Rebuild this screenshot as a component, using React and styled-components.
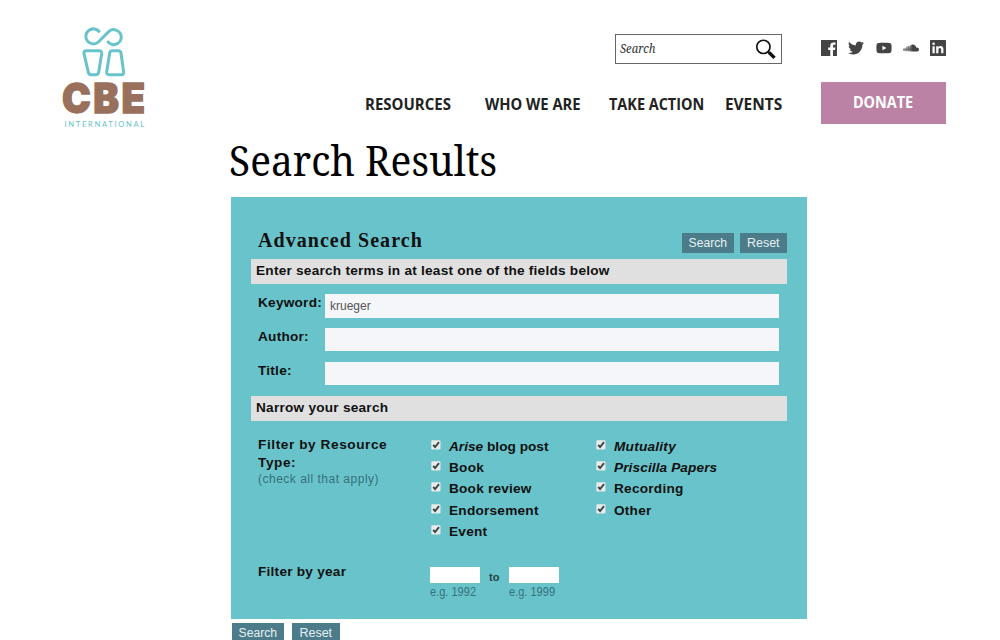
import React from 'react';
import styled, { createGlobalStyle } from 'styled-components';
import { FaTwitter, FaYoutube, FaSoundcloud } from 'react-icons/fa';

const sans = '"Liberation Sans", Arial, sans-serif';
const humanist = '"Open Sans", "Noto Sans", sans-serif';
const serif = '"Noto Serif", "Liberation Serif", serif';
const teal = '#69c3cb';

const Global = createGlobalStyle`
  * { box-sizing: border-box; }
  body { margin: 0; background: #fff; overflow: hidden; }
  h1, h2, h3, p { margin: 0; }
`;

const Page = styled.div`
  width: 1000px;
  height: 640px;
  overflow: hidden;
  color: #111;
  font-family: ${sans};
`;

const Fit = styled.span`
  display: inline-block;
  white-space: pre;
  transform: scaleX(${(p) => p.$x || 1});
  transform-origin: ${(p) => p.$origin || '0 50%'};
  letter-spacing: ${(p) => p.$ls || 0}px;
`;

const Header = styled.header`
  display: grid;
  grid-template-columns: 303px 417px 125px;
  height: 130px;
  padding-left: 62px;
`;
const Logo = styled.div`
  display: flex;
  flex-direction: column;
  padding-top: 26.7px;
  svg { display: block; margin-left: 19.7px; }
`;
const Wordmark = styled.div`
  height: 37px;
  margin-top: 4px;
  font: 900 40.5px/36px Inter, sans-serif;
  color: #98705c;
  -webkit-text-stroke: 1.3px #98705c;
`;
const Tagline = styled.div`
  padding-left: 2.5px;
  font: 400 7.6px/12px Lato, sans-serif;
  color: ${teal};
`;
const Center = styled.div`
  display: flex;
  flex-direction: column;
  align-items: flex-end;
  padding-top: 34px;
`;
const SearchBox = styled.div`
  display: flex;
  align-items: center;
  justify-content: space-between;
  width: 167px;
  height: 30px;
  padding: 0 5px 0 4px;
  border: 1.5px solid #666;
  font: italic 400 12.5px/28px ${serif};
  color: #333;
`;
const Nav = styled.nav`
  display: grid;
  grid-template-columns: 120px 124px 116px 57px;
  margin-top: 28px;
  font: 700 16.3px/24px ${humanist};
  color: #222;
`;
const Side = styled.div`
  margin-left: 39px;
  width: 125px;
  padding-top: 40px;
`;
const Social = styled.div`
  display: flex;
  align-items: center;
  justify-content: space-between;
  height: 16px;
  color: #444;
  svg { display: block; }
`;
const Donate = styled.div`
  display: flex;
  align-items: center;
  justify-content: center;
  height: 42px;
  margin-top: 26px;
  padding-bottom: 2px;
  background: #bc82a5;
  color: #fff;
  font: 700 16.3px/40px ${humanist};
`;

const Title = styled.h1`
  height: 67px;
  padding-left: 228.5px;
  font: 400 41.5px/61px ${serif};
  color: #000;
`;

const Panel = styled.section`
  width: 576px;
  height: 422px;
  margin-left: 231px;
  padding: 36px 20px 0;
  background: ${teal};
`;
const PanelHead = styled.div`
  display: flex;
  align-items: flex-start;
  justify-content: space-between;
  height: 26px;
  padding-left: 7px;
`;
const PanelTitle = styled.h2`
  font: 700 20px/14px "Liberation Serif", serif;
`;
const Buttons = styled.div`
  display: flex;
  gap: ${(p) => p.$gap || 6}px;
`;
const Button = styled.div`
  width: ${(p) => p.$w}px;
  height: 19.5px;
  background: #4c7c89;
  color: #e6f1f6;
  font: 400 12.5px/20px ${sans};
  text-align: center;
`;
const Bar = styled.div`
  height: 25px;
  padding-left: 5px;
  background: #e0e0e0;
  font: 700 12.5px/25px ${sans};
`;
const Fields = styled.div`
  display: flex;
  flex-direction: column;
  gap: 10.7px;
  padding: 10px 8px 11px 7px;
`;
const Field = styled.div`
  display: grid;
  grid-template-columns: 67px 1fr;
  height: 23.2px;
  font: 700 12.5px/18px ${sans};
`;
const Input = styled.div`
  padding-left: 5px;
  background: #f4f6f9;
  color: #555;
  font: 400 12px/24px ${sans};
`;
const Filters = styled.div`
  display: grid;
  grid-template-columns: 173px 165px 1fr;
  height: 131px;
  padding: 15px 0 0 7px;
  font: 700 12.5px/18px ${sans};
`;
const Hint = styled.div`
  color: #35727b;
  font: 400 12px/${(p) => p.$lh || 15}px ${sans};
`;
const Options = styled.div`
  font-size: 12.5px;
`;
const Option = styled.div`
  display: grid;
  grid-template-columns: 18px 1fr;
  height: 21.2px;
  line-height: 22px;
  svg { display: block; margin-top: 4px; }
`;
const Year = styled.div`
  display: grid;
  grid-template-columns: 172px 50px 28.5px 50px;
  padding: 11px 0 0 7px;
  font: 700 12.5px/18px ${sans};
`;
const YearInput = styled.div`
  height: 15.5px;
  margin-top: 4.5px;
  background: #fff;
`;
const To = styled.div`
  padding: 5px 0 0 9px;
  font: 700 11px/18px ${sans};
  color: #23454a;
`;
const Bottom = styled.div`
  padding: 4px 0 0 232px;
`;

const Mark = () => (
  <svg width="45" height="50" viewBox="95 35 135 150" fill="none" stroke={teal} strokeWidth="9" strokeLinejoin="round">
    <path d="M148 51A22.5 22.5 0 1 0 144 80L176 48A22.5 22.5 0 1 1 171 77" />
    <path d="M109 106H146Q155 106 154 115L145 171Q144 178 137 178H122Q115 178 114 171L101 115Q99 106 109 106Z" />
    <path d="M186 106H204Q211 106 212 113L220 170Q221 178 213 178H177Q168 178 169 170L178 113Q179 106 186 106Z" />
  </svg>
);
const Lens = () => (
  <svg width="21" height="21" viewBox="0 0 20 20" fill="none" stroke="#111">
    <circle cx="8" cy="7.5" r="6.3" strokeWidth="1.6" />
    <path d="M12.4 11.9L14 13.5" strokeWidth="2" />
    <path d="M13.4 12.9L18.6 18" strokeWidth="3.2" />
  </svg>
);
const Facebook = () => (
  <svg width="16" height="16" viewBox="0 0 16 16">
    <path fill="currentColor" d="M0 0H16V16H12V10H14L14.4 7.5H12V6C12 5.2 12.4 4.8 13.2 4.8H14.5V2.6C14.1 2.5 13.4 2.5 12.7 2.5C10.6 2.5 9.3 3.6 9.3 5.7V7.5H7.2V10H9.3V16H0Z" />
  </svg>
);
const LinkedIn = () => (
  <svg width="16" height="16" viewBox="0 0 16 16">
    <rect width="16" height="16" rx="0.6" fill="currentColor" />
    <path fill="#fff" d="M2.5 6.2H4.7V13.3H2.5ZM6.2 6.2H8.3V7.2C8.8 6.4 9.5 6 10.6 6C12.7 6 13.4 7.3 13.4 9.3V13.3H11.2V9.8C11.2 8.7 11 7.9 9.9 7.9C8.8 7.9 8.4 8.7 8.4 9.8V13.3H6.2Z" />
    <circle cx="3.6" cy="3.8" r="1.3" fill="#fff" />
  </svg>
);
const Check = () => (
  <svg width="10" height="10" viewBox="0 0 10 10">
    <rect x="0.3" y="0.3" width="9.2" height="9.2" rx="1.2" fill="#e9eaea" />
    <path d="M2.2 5L4.1 7L8 2.2" fill="none" stroke="#3f4446" strokeWidth="1.9" />
  </svg>
);

const Bold = ({ x = 1.09, ls = 0.22, children }) => <Fit $x={x} $ls={ls}>{children}</Fit>;
const Item = ({ children, x, ls }) => (
  <Option><Check /><div><Bold x={x} ls={ls}>{children}</Bold></div></Option>
);
const Actions = ({ gap }) => (
  <Buttons $gap={gap}>
    <Button $w={52}><Fit $x={0.97} $origin="50% 50%">Search</Fit></Button>
    <Button $w={47.5}><Fit $origin="50% 50%">Reset</Fit></Button>
  </Buttons>
);

export default function App() {
  return (
    <Page>
      <Global />
      <Header>
        <Logo>
          <Mark />
          <Wordmark><Fit $x={0.95} $ls={2.6}>CBE</Fit></Wordmark>
          <Tagline><Fit $ls={1.68}>INTERNATIONAL</Fit></Tagline>
        </Logo>
        <Center>
          <SearchBox><Fit $x={0.9}>Search</Fit><Lens /></SearchBox>
          <Nav>
            <Fit $x={0.921}>RESOURCES</Fit>
            <Fit $x={0.905}>WHO WE ARE</Fit>
            <Fit $x={0.886}>TAKE ACTION</Fit>
            <Fit $x={0.945}>EVENTS</Fit>
          </Nav>
        </Center>
        <Side>
          <Social>
            <Facebook /><FaTwitter size={16} /><FaYoutube size={16} /><FaSoundcloud size={16} /><LinkedIn />
          </Social>
          <Donate><Fit $x={0.885} $origin="50% 50%">DONATE</Fit></Donate>
        </Side>
      </Header>
      <Title><Fit $x={0.937}>Search Results</Fit></Title>
      <Panel>
        <PanelHead>
          <PanelTitle><Fit $ls={1.05}>Advanced Search</Fit></PanelTitle>
          <Actions />
        </PanelHead>
        <Bar><Bold>Enter search terms in at least one of the fields below</Bold></Bar>
        <Fields>
          <Field><Bold>Keyword:</Bold><Input>krueger</Input></Field>
          <Field><Bold>Author:</Bold><Input /></Field>
          <Field><Bold>Title:</Bold><Input /></Field>
        </Fields>
        <Bar><Bold>Narrow your search</Bold></Bar>
        <Filters>
          <div>
            <Bold ls={0.53}>{'Filter by Resource\nType:'}</Bold>
            <Hint><Fit $ls={0.5}>(check all that apply)</Fit></Hint>
          </div>
          <Options>
            <Item ls={0.02}><i>Arise</i> blog post</Item>
            <Item>Book</Item>
            <Item ls={0.2}>Book review</Item>
            <Item>Endorsement</Item>
            <Item>Event</Item>
          </Options>
          <Options>
            <Item><i>Mutuality</i></Item>
            <Item ls={0.1}><i>Priscilla Papers</i></Item>
            <Item>Recording</Item>
            <Item>Other</Item>
          </Options>
        </Filters>
        <Year>
          <Bold>Filter by year</Bold>
          <div><YearInput /><Hint $lh={18}><Fit $x={0.92}>e.g. 1992</Fit></Hint></div>
          <To>to</To>
          <div><YearInput /><Hint $lh={18}><Fit $x={0.92}>e.g. 1999</Fit></Hint></div>
        </Year>
      </Panel>
      <Bottom><Actions gap={8} /></Bottom>
    </Page>
  );
}
